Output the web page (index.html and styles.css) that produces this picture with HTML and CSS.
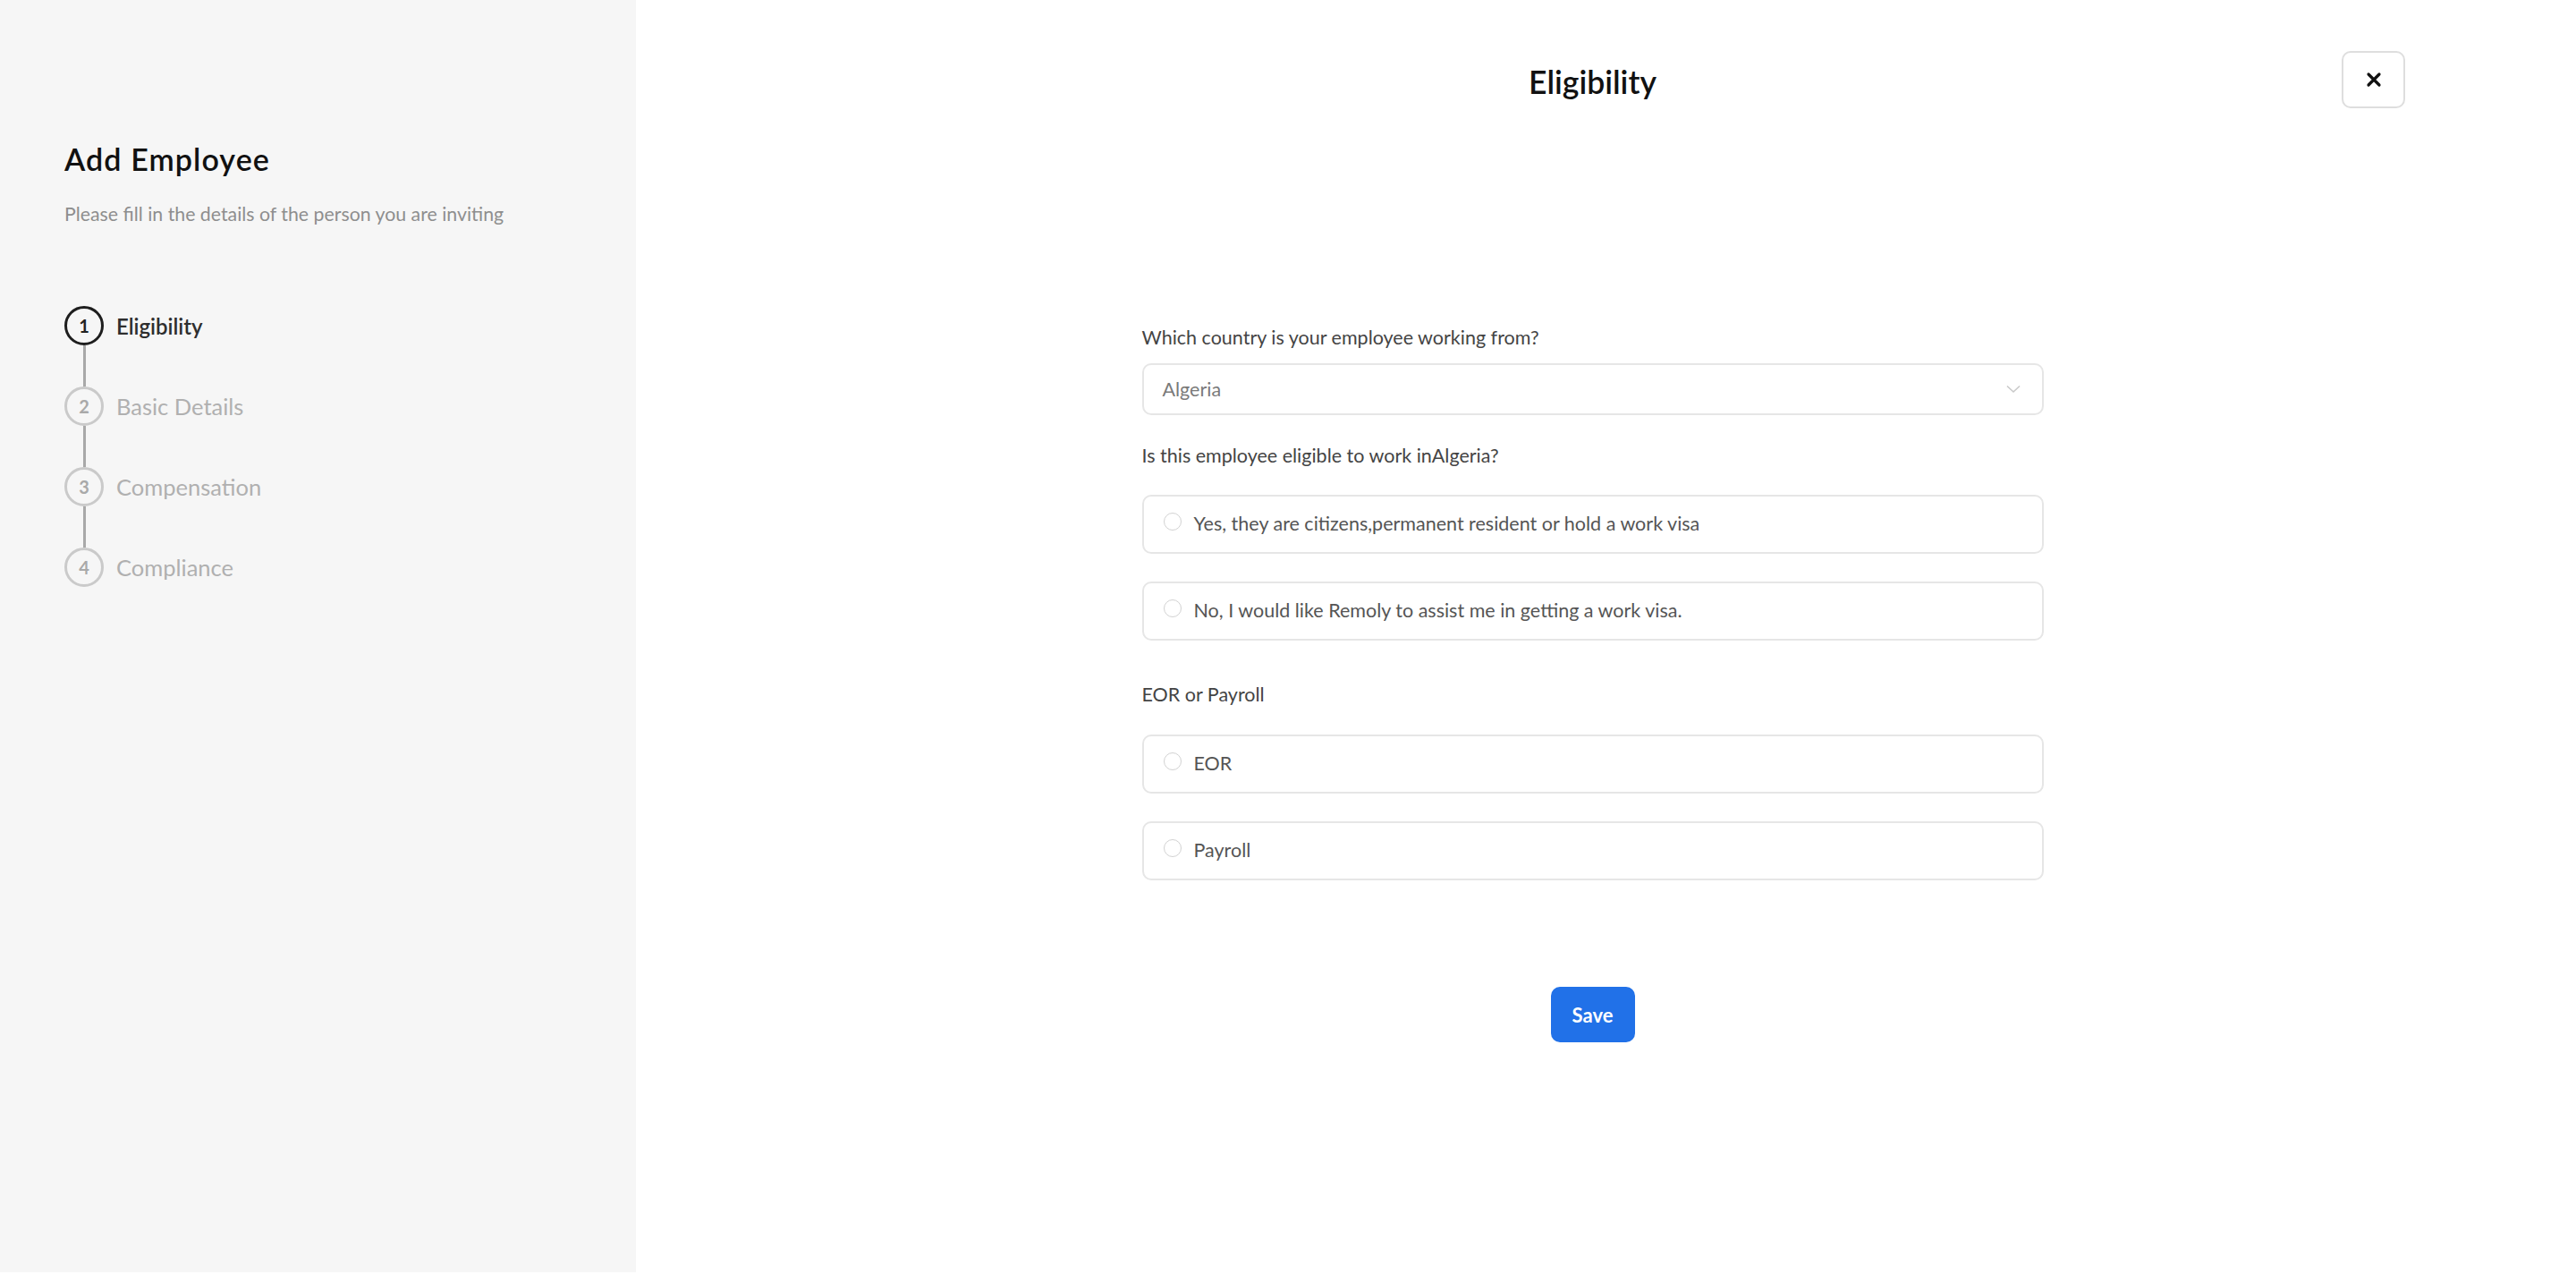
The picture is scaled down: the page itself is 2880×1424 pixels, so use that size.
FILE: index.html
```html
<!DOCTYPE html>
<html lang="en">
<head>
<meta charset="utf-8">
<title>Add Employee</title>
<link rel="stylesheet" href="styles.css">
</head>
<body>
<div class="page">
  <aside class="sidebar">
    <h1 class="side-title">Add Employee</h1>
    <p class="side-sub">Please fill in the details of the person you are inviting</p>
    <ol class="steps">
      <li class="step active"><span class="step-num">1</span><span class="step-label">Eligibility</span></li>
      <li class="connector"></li>
      <li class="step"><span class="step-num">2</span><span class="step-label">Basic Details</span></li>
      <li class="connector"></li>
      <li class="step"><span class="step-num">3</span><span class="step-label">Compensation</span></li>
      <li class="connector"></li>
      <li class="step"><span class="step-num">4</span><span class="step-label">Compliance</span></li>
    </ol>
  </aside>
  <main class="main">
    <header class="header">
      <div></div>
      <h2 class="main-title">Eligibility</h2>
      <button class="close" aria-label="Close">
        <svg width="18" height="18" viewBox="0 0 18 18"><path d="M3 3 L15 15 M15 3 L3 15" stroke="#111" stroke-width="3.2" stroke-linecap="round"/></svg>
      </button>
    </header>
    <form class="form">
      <label class="q">Which country is your employee working from?</label>
      <div class="select">
        <span>Algeria</span>
        <svg width="16" height="10" viewBox="0 0 16 10"><path d="M1 1.5 L8 8 L15 1.5" fill="none" stroke="#c9c9c9" stroke-width="1.6"/></svg>
      </div>
      <label class="q q2">Is this employee eligible to work inAlgeria?</label>
      <div class="option"><span class="radio"></span><span>Yes, they are citizens,permanent resident or hold a work visa</span></div>
      <div class="option"><span class="radio"></span><span>No, I would like Remoly to assist me in getting a work visa.</span></div>
      <label class="q q3">EOR or Payroll</label>
      <div class="option"><span class="radio"></span><span>EOR</span></div>
      <div class="option"><span class="radio"></span><span>Payroll</span></div>
      <div class="actions"><button type="button" class="save">Save</button></div>
    </form>
  </main>
</div>
</body>
</html>
```
FILE: styles.css
```css
* { box-sizing: border-box; }
html, body { margin: 0; padding: 0; }
body {
  font-family: "Lato", "Noto Sans", sans-serif;
  background: #ffffff;
  color: #222;
}
.page {
  display: flex;
  height: 1424px;
}
.sidebar {
  width: 711px;
  flex: none;
  background: #f6f6f6;
  padding: 158px 0 0 72px;
  height: 1422px;
}
.side-title {
  margin: 0;
  font-size: 34px;
  line-height: 40px;
  font-weight: 600;
  color: #111;
  letter-spacing: 1.1px;
}
.side-sub {
  margin: 27px 0 0;
  font-size: 21.3px;
  line-height: 28px;
  color: #8e8e8e;
}
.steps {
  list-style: none;
  margin: 89px 0 0;
  padding: 0;
}
.step {
  display: flex;
  align-items: center;
  height: 44px;
}
.step-num {
  width: 44px;
  height: 44px;
  border-radius: 50%;
  border: 3px solid #cacaca;
  display: flex;
  align-items: center;
  justify-content: center;
  font-size: 20px;
  font-weight: 700;
  color: #a9a9a9;
  flex: none;
}
.step-label {
  margin-left: 14px;
  font-size: 25.5px;
  color: #b0b0b0;
}
.step.active .step-num {
  border-color: #1e1e1e;
  color: #222;
}
.step.active .step-label {
  color: #2e2e2e;
  font-weight: 600;
  font-size: 24px;
}
.connector {
  width: 3px;
  height: 46px;
  margin-left: 20.5px;
  background: #a8a8a8;
}
.main {
  flex: 1;
  padding: 57px 30px 0 0;
}
.header {
  display: grid;
  grid-template-columns: 1fr auto 1fr;
  align-items: center;
  height: 64px;
}
.main-title {
  margin: 6px 0 0;
  font-size: 35.5px;
  font-weight: 600;
  color: #111;
  line-height: 40px;
}
.close {
  justify-self: end;
  margin-right: 161px;
  width: 71px;
  height: 64px;
  border: 2px solid #dedede;
  border-radius: 10px;
  background: #fff;
  display: flex;
  align-items: center;
  justify-content: center;
  padding: 0;
}
.form {
  width: 1008px;
  margin: 242px auto 0;
  display: flex;
  flex-direction: column;
}
.q {
  font-size: 21.5px;
  line-height: 28px;
  color: #444;
  margin-bottom: 15px;
}
.q2 { margin-top: 31px; margin-bottom: 30px; }
.q3 { margin-top: 15px; margin-bottom: 31px; }
.select {
  height: 58px;
  border: 2px solid #e6e6e6;
  border-radius: 10px;
  display: flex;
  align-items: center;
  justify-content: space-between;
  padding: 0 24px 0 21px;
  font-size: 21.5px;
  color: #7a7a7a;
}
.option {
  height: 66px;
  border: 2px solid #e6e6e6;
  border-radius: 10px;
  display: flex;
  align-items: center;
  padding: 0 0 2px 22px;
  font-size: 21.5px;
  color: #555;
  margin-bottom: 31px;
}
.radio {
  width: 20px;
  height: 20px;
  border-radius: 50%;
  border: 1.5px solid #d2d2d2;
  margin-right: 14px;
  margin-top: -4px;
  flex: none;
}
.actions {
  display: flex;
  justify-content: center;
  margin-top: 88px;
}
.save {
  width: 94px;
  height: 62px;
  border: none;
  border-radius: 10px;
  background: #2171e8;
  color: #fff;
  font-family: inherit;
  font-size: 22px;
  font-weight: 700;
}
```
